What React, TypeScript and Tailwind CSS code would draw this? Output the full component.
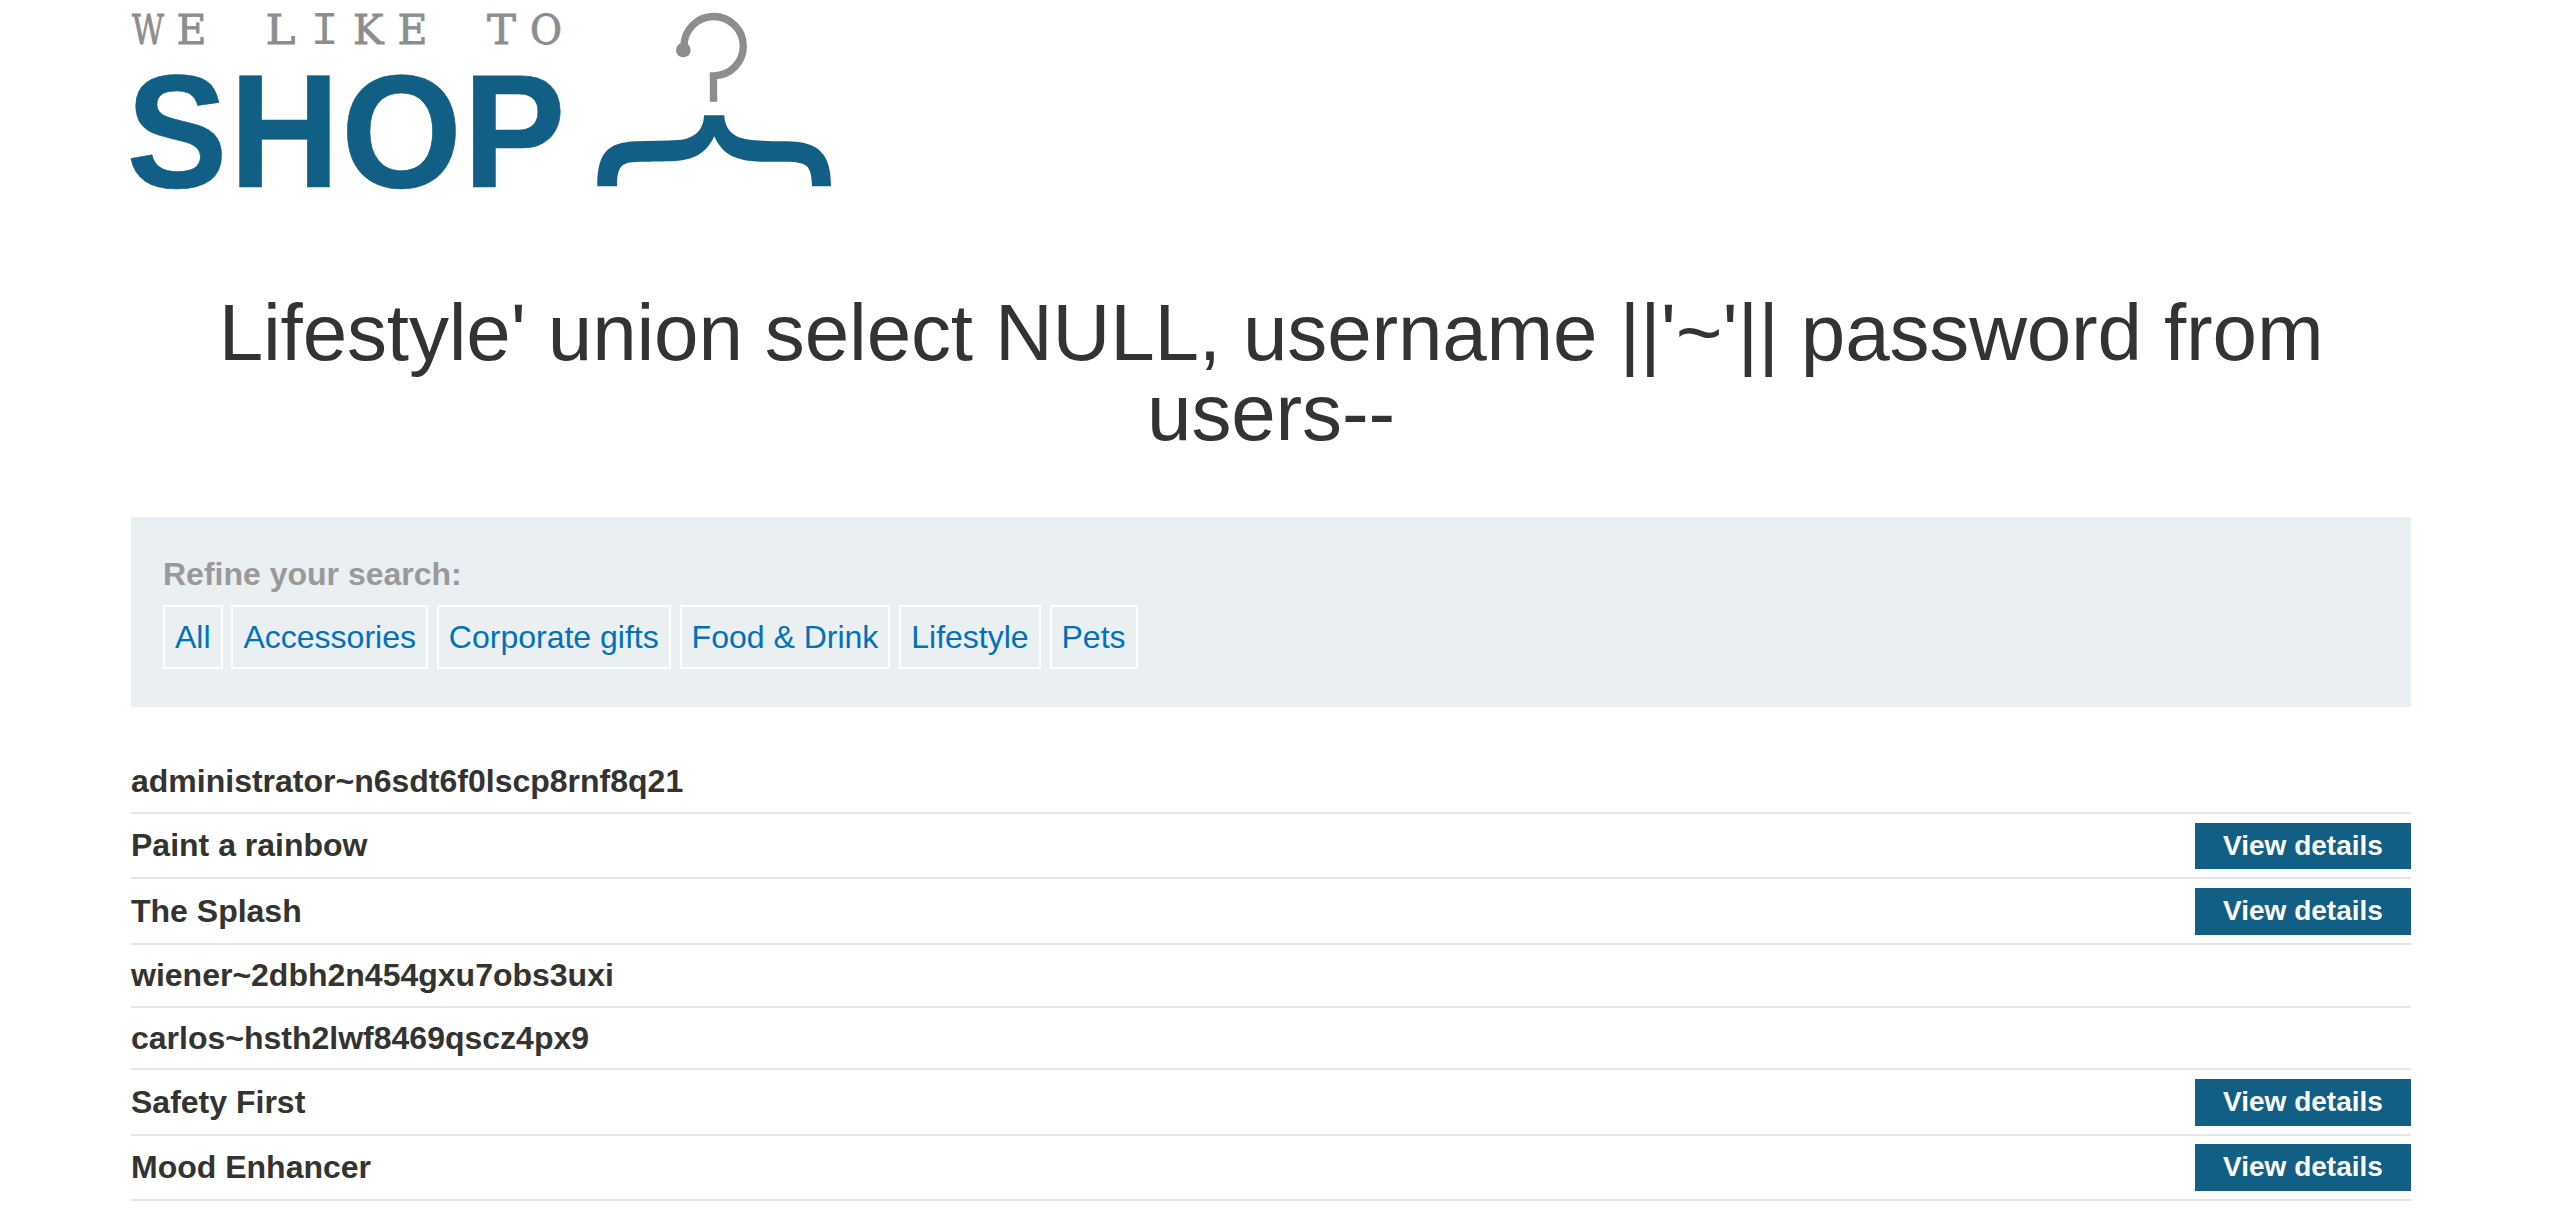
const filters = ["All", "Accessories", "Corporate gifts", "Food & Drink", "Lifestyle", "Pets"];

type Row = { name: string; details: boolean; box: string; button?: string };

const rows: Row[] = [
  { name: "administrator~n6sdt6f0lscp8rnf8q21", details: false, box: "h-[63px] pt-[11px]" },
  { name: "Paint a rainbow", details: true, box: "h-[65px] pt-3", button: "-mt-[3px] h-[46px]" },
  { name: "The Splash", details: true, box: "h-[66px] pt-[13px]", button: "-mt-1 h-[47px]" },
  { name: "wiener~2dbh2n454gxu7obs3uxi", details: false, box: "h-[63px] pt-[11px]" },
  { name: "carlos~hsth2lwf8469qscz4px9", details: false, box: "h-[62px] pt-[11px]" },
  { name: "Safety First", details: true, box: "h-[66px] pt-[13px]", button: "-mt-1 h-[47px]" },
  { name: "Mood Enhancer", details: true, box: "h-[65px] pt-3", button: "-mt-1 h-[47px]" },
];

// Left edge and drawn advance of each letter in the upper line of the logo.
const tagline = [
  { c: "W", x: 132, w: 32 },
  { c: "E", x: 176.5, w: 30 },
  { c: "L", x: 265.5, w: 30 },
  { c: "K", x: 353, w: 30.5 },
  { c: "E", x: 397.5, w: 30 },
  { c: "T", x: 487, w: 29 },
  { c: "O", x: 530, w: 32 },
];

const shop = [
  { c: "S", x: 126.5, w: 101 },
  { c: "H", x: 229.5, w: 110 },
  { c: "O", x: 341, w: 121 },
  { c: "P", x: 463, w: 102.5 },
];

function Logo() {
  return (
    <svg viewBox="131 0 702 200" className="block h-[200px] w-[702px] overflow-visible">
      <g fill="#8c8d8f" stroke="#8c8d8f" strokeWidth="0.8" fontFamily="DejaVu Serif, serif" fontSize="41">
        {tagline.map((l, i) => (
          <text key={i} x={l.x} y="44" textLength={l.w} lengthAdjust="spacingAndGlyphs">
            {l.c}
          </text>
        ))}
        <text x="310.500" y="44.200" stroke="none" fontFamily="Liberation Mono, monospace" fontSize="47">
          I
        </text>
      </g>
      <g
        fill="#115f84"
        stroke="#115f84"
        strokeWidth="0.6"
        fontFamily="Liberation Sans, Arial, sans-serif"
        fontSize="161.500"
        fontWeight="700"
      >
        {shop.map((l) => (
          <text key={l.c} x={l.x} y="186.700" textLength={l.w} lengthAdjust="spacingAndGlyphs">
            {l.c}
          </text>
        ))}
      </g>
      <g transform="translate(570 0) scale(0.33333)">
        <path d="M342 140A89 89 0 1 1 430.500 227.500V305" fill="none" stroke="#8c8d8f" strokeWidth="22" />
        <circle cx="340" cy="150" r="22" fill="#8c8d8f" />
        <path
          d="M402 346C401 388 376 417 325 420C285 423 240 422 198 424C110 427 82 462 82 559H141C141 505 152 487 195 486C235 485 265 485 300 484C370 482 408 462 433 409C456 462 495 484 575 485H650C706 487 725 490 726 559H783C783 465 750 425 650 424C610 423 580 423 545 420C490 416 464 388 463 346Z"
          fill="#115f84"
        />
      </g>
    </svg>
  );
}

export default function App() {
  return (
    <div className="flex h-[1224px] flex-col overflow-hidden bg-white pr-[146px] pl-[131px] font-['Liberation_Sans',Arial,sans-serif] text-[32px] text-[#333332]">
      <header className="h-[293px] shrink-0">
        <Logo />
      </header>
      <h1 className="h-[224px] shrink-0 text-center text-[80px] leading-[80px] tracking-[-0.16px]">
        Lifestyle' union select NULL, username ||'~'|| password from
        <br />
        users--
      </h1>
      <section className="h-[190px] shrink-0 bg-[#eaeff2] px-8 pt-[38px]">
        <div className="h-[50px] leading-[38px] font-bold text-[#999999]">Refine your search:</div>
        <nav className="flex gap-[8.9px]">
          {filters.map((f) => (
            <a
              key={f}
              href="#"
              className="h-16 border-2 border-white px-[10px] leading-[60px] whitespace-nowrap text-[#0071bc]"
            >
              {f}
            </a>
          ))}
        </nav>
      </section>
      <main className="mt-11 shrink-0">
        {rows.map((r) => (
          <div key={r.name} className={`flex items-start justify-between border-b-2 border-[#e5e5e5] ${r.box}`}>
            <span className="leading-[38px] font-bold">{r.name}</span>
            {r.details && (
              <a
                href="#"
                className={`w-[216px] bg-[#115f84] text-center text-[28px] leading-[45px] font-bold text-white ${r.button}`}
              >
                View details
              </a>
            )}
          </div>
        ))}
      </main>
    </div>
  );
}
